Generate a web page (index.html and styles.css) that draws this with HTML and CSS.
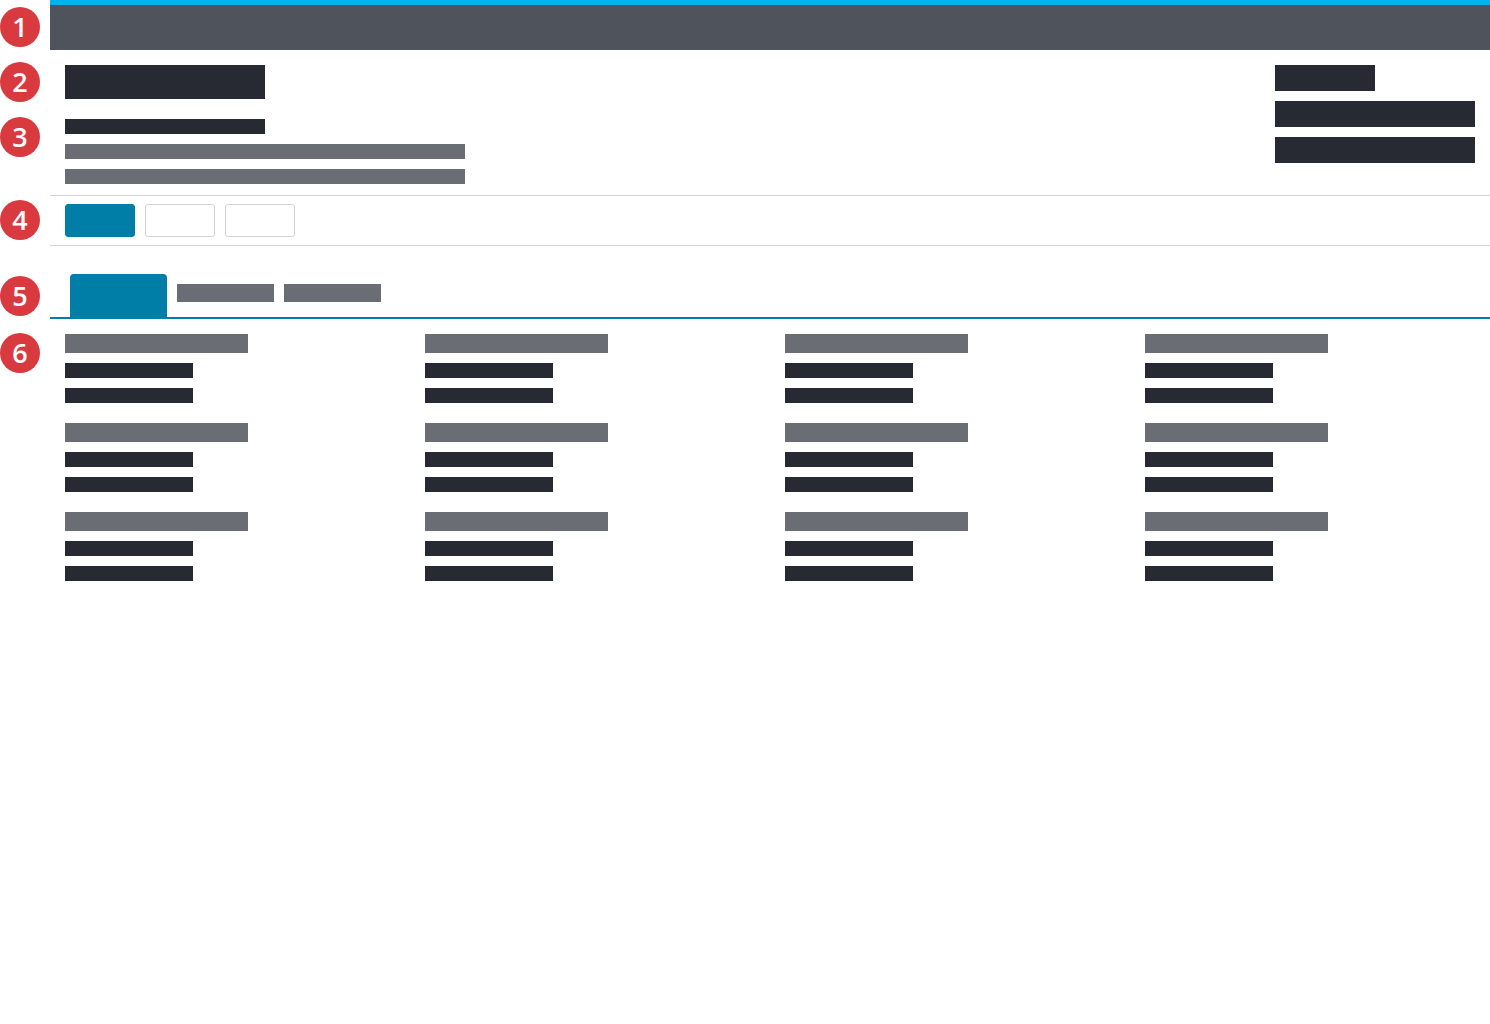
FILE: index.html
```html
<!DOCTYPE html>
<html lang="en">
<head>
<meta charset="utf-8">
<title>Layout</title>
<link rel="stylesheet" href="styles.css">
</head>
<body>
<div class="page">
  <div class="badge b1">1</div>
  <div class="badge b2">2</div>
  <div class="badge b3">3</div>
  <div class="badge b4">4</div>
  <div class="badge b5">5</div>
  <div class="badge b6">6</div>

  <main class="main">
    <div class="topbar"></div>

    <header class="header">
      <div class="header-left">
        <div class="blk title"></div>
        <div class="blk sub"></div>
        <div class="blk desc"></div>
        <div class="blk desc"></div>
      </div>
      <div class="header-right">
        <div class="blk meta-short"></div>
        <div class="blk meta-long"></div>
        <div class="blk meta-long"></div>
      </div>
    </header>

    <div class="toolbar">
      <div class="btn btn-primary"></div>
      <div class="btn"></div>
      <div class="btn"></div>
    </div>

    <nav class="tabs">
      <div class="tab tab-active"></div>
      <div class="tab"></div>
      <div class="tab"></div>
    </nav>

    <section class="grid">
      <div class="col">
        <div class="field"><div class="label"></div><div class="val"></div><div class="val"></div></div>
        <div class="field"><div class="label"></div><div class="val"></div><div class="val"></div></div>
        <div class="field"><div class="label"></div><div class="val"></div><div class="val"></div></div>
      </div>
      <div class="col">
        <div class="field"><div class="label"></div><div class="val"></div><div class="val"></div></div>
        <div class="field"><div class="label"></div><div class="val"></div><div class="val"></div></div>
        <div class="field"><div class="label"></div><div class="val"></div><div class="val"></div></div>
      </div>
      <div class="col">
        <div class="field"><div class="label"></div><div class="val"></div><div class="val"></div></div>
        <div class="field"><div class="label"></div><div class="val"></div><div class="val"></div></div>
        <div class="field"><div class="label"></div><div class="val"></div><div class="val"></div></div>
      </div>
      <div class="col">
        <div class="field"><div class="label"></div><div class="val"></div><div class="val"></div></div>
        <div class="field"><div class="label"></div><div class="val"></div><div class="val"></div></div>
        <div class="field"><div class="label"></div><div class="val"></div><div class="val"></div></div>
      </div>
    </section>
  </main>
</div>
</body>
</html>
```

FILE: styles.css
```css
* { box-sizing: border-box; }
html, body { margin: 0; padding: 0; background: #ffffff; }
body { font-family: "Open Sans", "Liberation Sans", sans-serif; }

.page { position: relative; min-height: 1024px; }

.badge {
  position: absolute;
  left: 0;
  width: 40px;
  height: 40px;
  border-radius: 50%;
  background: #d93a3f;
  color: #ffffff;
  font-size: 27px;
  font-weight: 600;
  line-height: 40px;
  text-align: center;
}
.b1 { top: 7px; }
.b2 { top: 62px; }
.b3 { top: 117px; }
.b4 { top: 200px; }
.b5 { top: 276px; }
.b6 { top: 333px; }

.main { margin-left: 50px; }

.topbar {
  height: 50px;
  background: #4f535b;
  border-top: 5px solid #00b2ec;
}

.blk { background: #272a32; }

.header {
  display: flex;
  justify-content: space-between;
  padding: 15px 15px 11px;
  border-bottom: 1px solid #d3d3d3;
}
.header-left { display: flex; flex-direction: column; }
.title { width: 200px; height: 34px; }
.sub { width: 200px; height: 15px; margin-top: 20px; }
.desc { width: 400px; height: 15px; margin-top: 10px; background: #6a6d74; }

.header-right { display: flex; flex-direction: column; gap: 10px; }
.meta-short { width: 100px; height: 26px; }
.meta-long { width: 200px; height: 26px; }

.toolbar {
  display: flex;
  gap: 10px;
  padding: 8px 15px;
  border-bottom: 1px solid #d3d3d3;
}
.btn {
  width: 70px;
  height: 33px;
  border: 1px solid #d3d3d3;
  border-radius: 3px;
  background: #ffffff;
}
.btn-primary { background: #007ea8; border-color: #007ea8; }

.tabs {
  display: flex;
  align-items: flex-start;
  gap: 10px;
  padding: 28px 20px 0;
  border-bottom: 2px solid #007ea8;
}
.tab {
  width: 97px;
  height: 18px;
  margin-top: 10px;
  background: #6a6d74;
}
.tab-active {
  height: 43px;
  margin-top: 0;
  background: #007ea8;
  border-radius: 4px 4px 0 0;
}

.grid {
  display: grid;
  grid-template-columns: repeat(4, 360px);
  padding-top: 15px;
}
.col {
  display: flex;
  flex-direction: column;
  gap: 20px;
  padding-left: 15px;
}
.field { display: flex; flex-direction: column; gap: 10px; }
.label { width: 183px; height: 19px; background: #6a6d74; }
.val { width: 128px; height: 15px; background: #272a32; }
```
